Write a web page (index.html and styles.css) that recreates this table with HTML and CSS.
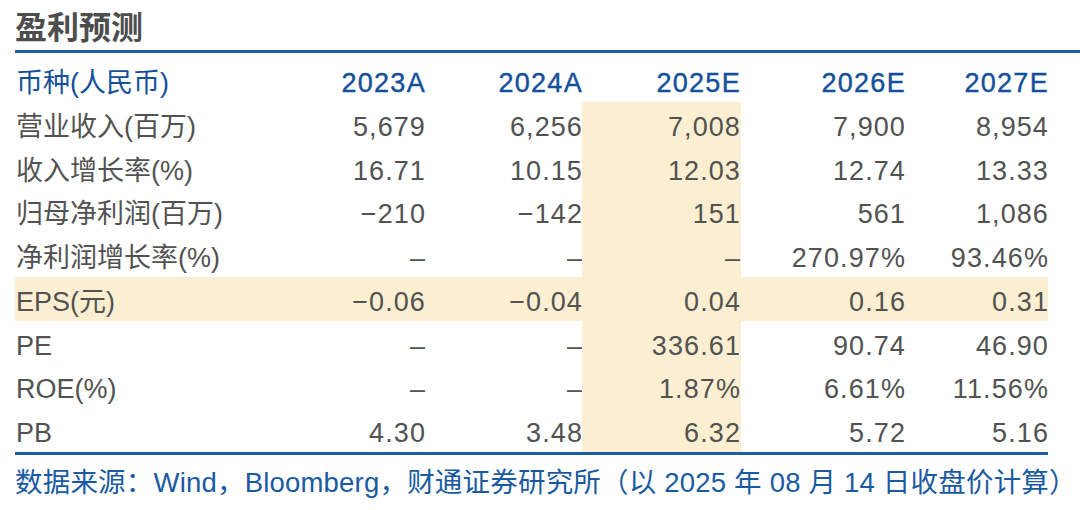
FILE: index.html
```html
<!DOCTYPE html>
<html lang="zh-CN">
<head>
<meta charset="utf-8">
<title>盈利预测</title>
<link rel="stylesheet" href="styles.css">
</head>
<body>
<div class="page">
  <h1 class="title">盈利预测</h1>
  <div class="table">
    <div class="row head">
      <div class="label">币种(人民币)</div>
      <div class="num">2023A</div>
      <div class="num">2024A</div>
      <div class="num">2025E</div>
      <div class="num">2026E</div>
      <div class="num">2027E</div>
    </div>
    <div class="row">
      <div class="label">营业收入(百万)</div>
      <div class="num">5,679</div>
      <div class="num">6,256</div>
      <div class="num hl">7,008</div>
      <div class="num">7,900</div>
      <div class="num">8,954</div>
    </div>
    <div class="row">
      <div class="label">收入增长率(%)</div>
      <div class="num">16.71</div>
      <div class="num">10.15</div>
      <div class="num hl">12.03</div>
      <div class="num">12.74</div>
      <div class="num">13.33</div>
    </div>
    <div class="row">
      <div class="label">归母净利润(百万)</div>
      <div class="num">−210</div>
      <div class="num">−142</div>
      <div class="num hl">151</div>
      <div class="num">561</div>
      <div class="num">1,086</div>
    </div>
    <div class="row">
      <div class="label">净利润增长率(%)</div>
      <div class="num">–</div>
      <div class="num">–</div>
      <div class="num hl">–</div>
      <div class="num">270.97%</div>
      <div class="num">93.46%</div>
    </div>
    <div class="row row-hl">
      <div class="label">EPS(元)</div>
      <div class="num">−0.06</div>
      <div class="num">−0.04</div>
      <div class="num hl">0.04</div>
      <div class="num">0.16</div>
      <div class="num">0.31</div>
    </div>
    <div class="row">
      <div class="label">PE</div>
      <div class="num">–</div>
      <div class="num">–</div>
      <div class="num hl">336.61</div>
      <div class="num">90.74</div>
      <div class="num">46.90</div>
    </div>
    <div class="row">
      <div class="label">ROE(%)</div>
      <div class="num">–</div>
      <div class="num">–</div>
      <div class="num hl">1.87%</div>
      <div class="num">6.61%</div>
      <div class="num">11.56%</div>
    </div>
    <div class="row">
      <div class="label">PB</div>
      <div class="num">4.30</div>
      <div class="num">3.48</div>
      <div class="num hl">6.32</div>
      <div class="num">5.72</div>
      <div class="num">5.16</div>
    </div>
  </div>
  <p class="source">数据来源：Wind，Bloomberg，财通证券研究所（以 2025 年 08 月 14 日收盘价计算）</p>
</div>
</body>
</html>
```
FILE: styles.css
```css
html, body {
  margin: 0;
  padding: 0;
  background: #ffffff;
}

body {
  font-family: "Liberation Sans", "Noto Sans CJK SC", sans-serif;
  color: #525252;
}

.page {
  padding-left: 15px;
  width: 1065px;
}

.title {
  margin: 0;
  padding-top: 8px;
  padding-bottom: 2px;
  height: 40px;
  line-height: 40px;
  font-size: 32px;
  font-weight: 700;
  color: #4d4d4d;
  border-bottom: 3px solid #1d5d9e;
}

.table {
  width: 1033px;
  margin-top: 5px;
  border-bottom: 3px solid #1d5d9e;
}

.row {
  display: grid;
  grid-template-columns: 252px 158px 157px 158px 165px 143px;
  height: 43.75px;
  font-size: 27px;
}

.row > div {
  padding-top: 12px;
  line-height: 26px;
  white-space: nowrap;
}

.label {
  padding-left: 1px;
}

.num {
  text-align: right;
  letter-spacing: 1.1px;
  margin-right: -1px;
}

.head {
  color: #14509a;
}

.head .num {
  letter-spacing: 1.3px;
  -webkit-text-stroke: 0.4px #14509a;
}

.hl,
.row-hl {
  background: #fcefd1;
}

.source {
  margin: 13px 0 0 0;
  font-size: 27.5px;
  line-height: 30px;
  color: #1a5aa2;
  white-space: nowrap;
  letter-spacing: 0.2px;
}
```
